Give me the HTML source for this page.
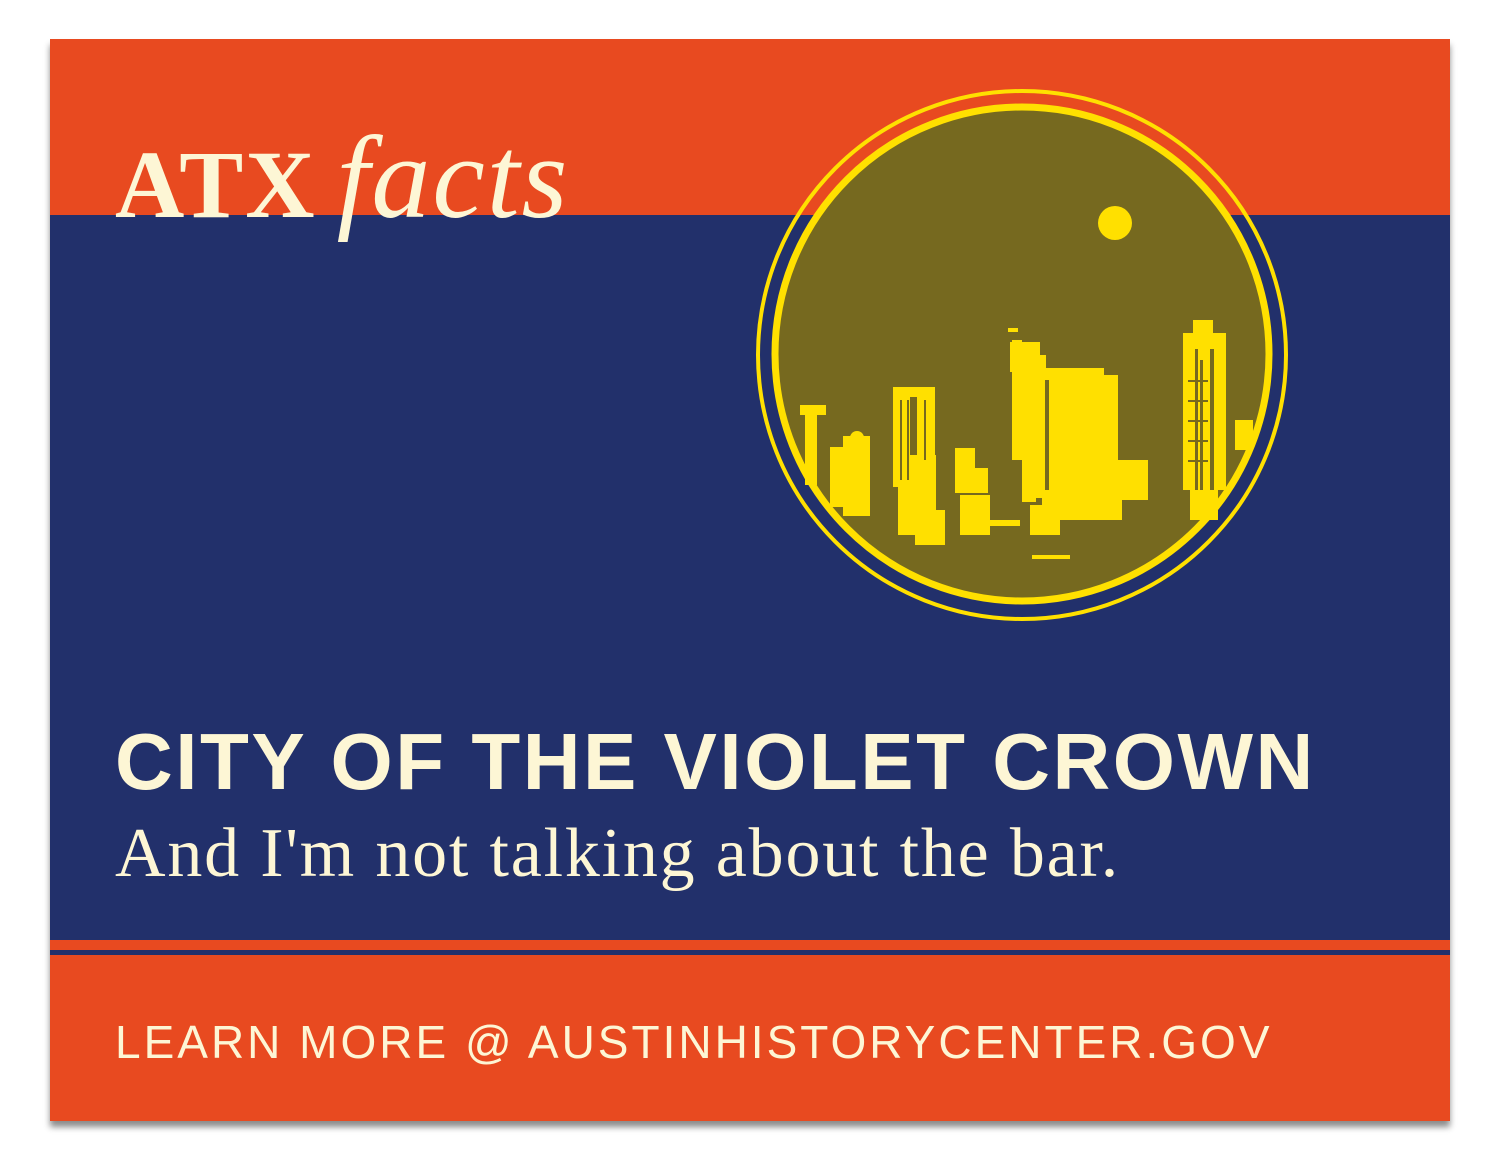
<!DOCTYPE html>
<html><head><meta charset="utf-8"><style>
body{margin:0;width:1500px;height:1159px;background:#fff;position:relative;overflow:hidden;font-family:"Liberation Sans",sans-serif}
.card{position:absolute;left:50px;top:39px;width:1400px;height:1082px;background:#22306b;box-shadow:0 6px 6px rgba(0,0,0,.45)}
.o{position:absolute;left:0;width:1400px;background:#e84a20}
.t{position:absolute;color:#fdf6d5;white-space:nowrap}
</style></head><body>
<div class="card">
<div class="o" style="top:0;height:176px"></div>
<div class="o" style="top:901px;height:10px"></div>
<div class="o" style="top:916px;height:166px"></div>
</div>
<svg style="position:absolute;left:0;top:0" width="1500" height="1159">
<circle cx="1022" cy="355" r="264" fill="none" stroke="#ffe000" stroke-width="4"/>
<circle cx="1022" cy="354" r="247" fill="#76691f" stroke="#ffe000" stroke-width="7"/>
<circle cx="1115" cy="223" r="17" fill="#ffe000"/>
<g fill="#ffe000">
<rect x="800" y="405" width="26" height="10"/><rect x="805" y="410" width="12" height="75"/>
<rect x="830" y="447" width="15" height="60"/><rect x="843" y="436" width="27" height="80"/><circle cx="857" cy="438" r="7"/>
<rect x="893" y="392" width="17" height="95"/><rect x="917" y="392" width="18" height="75"/><rect x="893" y="387" width="42" height="10"/>
<rect x="898" y="455" width="38" height="80"/><rect x="955" y="448" width="20" height="45"/><rect x="968" y="468" width="20" height="25"/>
<rect x="1008" y="328" width="10" height="4"/><rect x="1010" y="342" width="30" height="30"/><rect x="1012" y="340" width="10" height="120"/>
<rect x="1022" y="372" width="14" height="130"/><rect x="1036" y="355" width="10" height="20"/>
<rect x="1034" y="368" width="70" height="130"/><rect x="1090" y="375" width="28" height="115"/>
<rect x="1042" y="480" width="80" height="40"/><rect x="1118" y="460" width="30" height="40"/>
<rect x="1183" y="333" width="43" height="16"/><rect x="1193" y="320" width="20" height="14"/>
<rect x="1183" y="345" width="12" height="145"/><rect x="1214" y="345" width="12" height="145"/><rect x="1198" y="345" width="12" height="160"/>
<rect x="1190" y="490" width="28" height="30"/><rect x="1235" y="420" width="18" height="30"/>
<rect x="915" y="510" width="30" height="35"/><rect x="960" y="495" width="30" height="40"/><rect x="1030" y="505" width="30" height="30"/>
<rect x="1032" y="555" width="38" height="4"/><rect x="980" y="520" width="40" height="6"/>
</g>
<g fill="#76691f">
<rect x="900" y="400" width="2" height="80"/><rect x="907" y="400" width="2" height="80"/><rect x="924" y="400" width="2" height="60"/>
<rect x="1200" y="360" width="3" height="130"/><rect x="1188" y="380" width="20" height="2"/><rect x="1188" y="400" width="20" height="2"/><rect x="1188" y="420" width="20" height="2"/><rect x="1188" y="440" width="20" height="2"/><rect x="1188" y="460" width="20" height="2"/>
<rect x="1045" y="380" width="4" height="110"/>
</g>
</svg>
<div class="t" style="left:115px;top:110px;font-family:'Liberation Serif',serif;font-weight:bold;font-size:96px;letter-spacing:2px">ATX<i style="font-weight:normal;font-size:118px;letter-spacing:2px;margin-left:20px">facts</i></div>
<div class="t" style="left:115px;top:716px;font-weight:bold;font-size:80px;letter-spacing:2.5px">CITY OF THE VIOLET CROWN</div>
<div class="t" style="left:115px;top:814px;font-family:'Liberation Serif',serif;font-size:70px;letter-spacing:1.8px">And I'm not talking about the bar.</div>
<div class="t" style="left:115px;top:1015px;font-size:46px;letter-spacing:3px">LEARN MORE @ AUSTINHISTORYCENTER.GOV</div>
</body></html>
